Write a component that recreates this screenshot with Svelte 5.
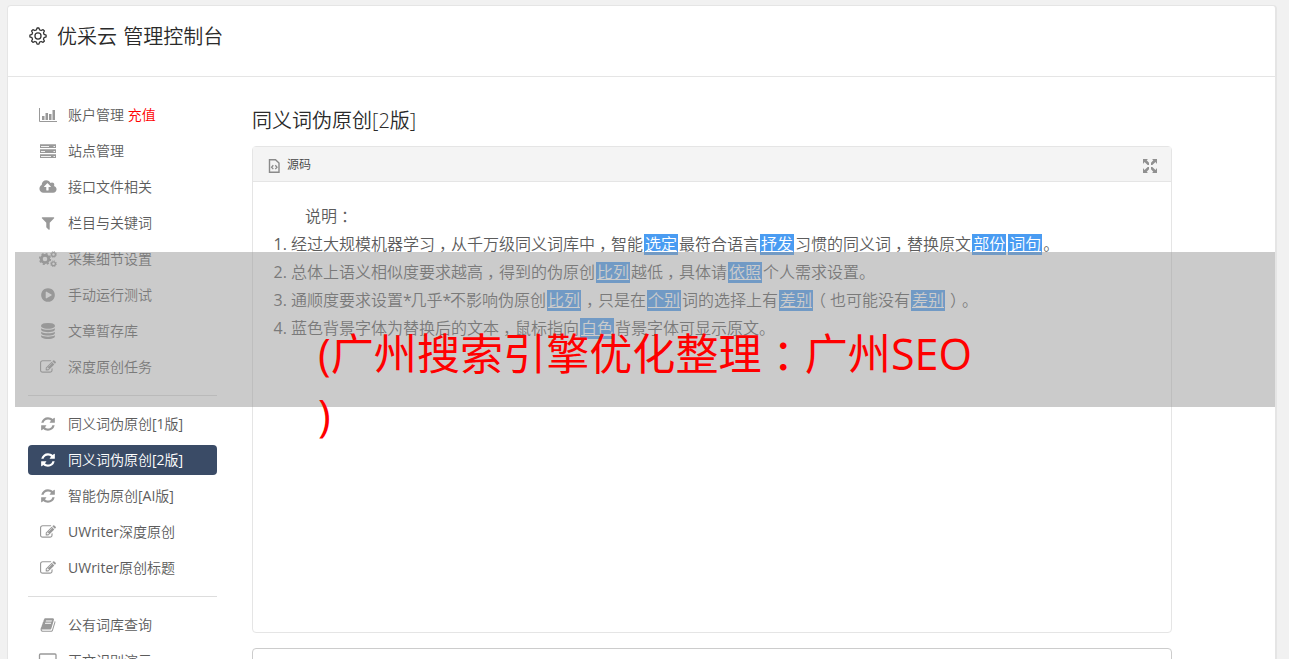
<script lang="ts">
	type MenuItem = { icon: string; label: string; extra?: string; active?: boolean };

	const menuGroups: MenuItem[][] = [
		[
			{ icon: "chart", label: "账户管理", extra: "充值" },
			{ icon: "server", label: "站点管理" },
			{ icon: "cloud", label: "接口文件相关" },
			{ icon: "filter", label: "栏目与关键词" },
			{ icon: "cogs", label: "采集细节设置" },
			{ icon: "play", label: "手动运行测试" },
			{ icon: "database", label: "文章暂存库" },
			{ icon: "edit", label: "深度原创任务" },
		],
		[
			{ icon: "refresh", label: "同义词伪原创[1版]" },
			{ icon: "refresh", label: "同义词伪原创[2版]", active: true },
			{ icon: "refresh", label: "智能伪原创[AI版]" },
			{ icon: "edit", label: "UWriter深度原创" },
			{ icon: "edit", label: "UWriter原创标题" },
		],
		[
			{ icon: "book", label: "公有词库查询" },
			{ icon: "laptop", label: "正文识别演示" },
		],
	];

	// replaced words are wrapped in {}
	const notes: string[] = [
		"经过大规模机器学习，从千万级同义词库中，智能{选定}最符合语言{抒发}习惯的同义词，替换原文{部份}{词句}。",
		"总体上语义相似度要求越高，得到的伪原创{比列}越低，具体请{依照}个人需求设置。",
		"通顺度要求设置*几乎*不影响伪原创{比列}，只是在{个别}词的选择上有{差别}（也可能没有{差别}）。",
		"蓝色背景字体为替换后的文本，鼠标指向{白色}背景字体可显示原文。",
	];

	// punctuation gets its own class so that it sits in the middle of its cell
	const marks: Record<string, string> = {
		"，": "mark right",
		"）": "mark right",
		"（": "mark left",
		"*": "star",
	};

	const split = (line: string) => line.split(/(\{.*?\}|[，（）*])/).filter(Boolean);

	const paths: Record<string, string> = {
		cloud: "M1280 864q0-14-9-23l-352-352q-9-9-23-9t-23 9l-351 351q-10 12-10 24 0 14 9 23t23 9h224v352q0 13 9.5 22.5t22.5 9.5h192q13 0 22.5-9.5t9.5-22.5v-352h224q13 0 22.5-9.5t9.5-22.5zm640 288q0 159-112.5 271.5t-271.5 112.5h-1088q-185 0-316.5-131.5t-131.5-316.5q0-130 70-240t188-165q-2-30-2-43 0-212 150-362t362-150q156 0 285.5 87t188.5 231q71-62 166-62 106 0 181 75t75 181q0 76-41 138 130 31 213.5 135.5t83.5 238.5z",
		filter: "M1595 295q17 41-14 70l-493 493v742q0 42-39 59-13 5-25 5-27 0-45-19l-256-256q-19-19-19-45v-486l-493-493q-31-29-14-70 17-39 59-39h1280q42 0 59 39z",
		play: "M896 128q209 0 385.5 103t279.5 279.5 103 385.5-103 385.5-279.5 279.5-385.5 103-385.5-103-279.5-279.5-103-385.5 103-385.5 279.5-279.5 385.5-103zm384 823q32-18 32-55t-32-55l-544-320q-31-19-64-1-32 19-32 56v640q0 37 32 56 16 8 32 8 17 0 32-9z",
		database: "M896 768q237 0 443-43t325-127v170q0 69-103 128t-280 93.5-385 34.5-385-34.5-280-93.5-103-128v-170q119 84 325 127t443 43zm0 768q237 0 443-43t325-127v170q0 69-103 128t-280 93.5-385 34.5-385-34.5-280-93.5-103-128v-170q119 84 325 127t443 43zm0-384q237 0 443-43t325-127v170q0 69-103 128t-280 93.5-385 34.5-385-34.5-280-93.5-103-128v-170q119 84 325 127t443 43zm0-1152q208 0 385 34.5t280 93.5 103 128v128q0 69-103 128t-280 93.5-385 34.5-385-34.5-280-93.5-103-128v-128q0-69 103-128t280-93.5 385-34.5z",
		edit: "M888 1184l116-116-152-152-116 116v56h96v96h56zm440-720q-16-16-33 1l-350 350q-17 17-1 33t33-1l350-350q17-17 1-33zm80 594v190q0 119-84.5 203.5t-203.5 84.5h-832q-119 0-203.5-84.5t-84.5-203.5v-832q0-119 84.5-203.5t203.5-84.5h832q63 0 117 25 15 7 18 23 3 17-9 29l-49 49q-14 14-32 8-23-6-45-6h-832q-66 0-113 47t-47 113v832q0 66 47 113t113 47h832q66 0 113-47t47-113v-126q0-13 9-22l64-64q15-15 35-7t20 29zm-96-738l288 288-672 672h-288v-288zm444 132l-92 92-288-288 92-92q28-28 68-28t68 28l152 152q28 28 28 68t-28 68z",
		refresh: "M1639 1056q0 5-1 7-64 268-268 434.5t-478 166.5q-146 0-282.5-55t-243.5-157l-129 129q-19 19-45 19t-45-19-19-45v-448q0-26 19-45t45-19h448q26 0 45 19t19 45-19 45l-137 137q71 66 161 102t187 36q134 0 250-65t186-179q11-17 53-117 8-23 30-23h192q13 0 22.5 9.5t9.5 22.5zm25-800v448q0 26-19 45t-45 19h-448q-26 0-45-19t-19-45 19-45l138-138q-148-137-349-137-134 0-250 65t-186 179q-11 17-53 117-8 23-30 23h-199q-13 0-22.5-9.5t-9.5-22.5v-7q65-268 270-434.5t480-166.5q146 0 284 55.5t245 156.5l130-129q19-19 45-19t45 19 19 45z",
		book: "M1703 478q40 57 18 129l-275 906q-19 64-76.5 107.5t-122.5 43.5h-923q-77 0-148.5-53.5t-99.5-131.5q-24-67-2-127 0-4 3-27t4-37q1-8-3-21.5t-3-19.5q2-11 8-21t16.5-23.5 16.5-23.5q23-38 45-91.5t30-91.5q3-10 .5-30t-.5-28q3-11 17-28t17-23q21-36 42-92t25-90q1-9-2.5-32t.5-28q4-13 22-30.5t22-22.5q19-26 42.5-84.5t27.5-96.5q1-8-3-25.5t-2-26.5q2-8 9-18t18-23 17-21q8-12 16.5-30.5t15-35 16-36 19.5-32 26.5-23.5 36-11.5 47.5 5.5l-1 3q38-9 51-9h761q74 0 114 56t18 130l-274 906q-36 119-71.5 153.5t-128.5 34.5h-869q-27 0-38 15-11 16-1 43 24 70 144 70h923q29 0 56-15.5t35-41.5l300-987q7-22 5-57 38 15 59 43zm-1064 2q-4 13 2 22.5t20 9.5h608q13 0 25.5-9.5t16.5-22.5l21-64q4-13-2-22.5t-20-9.5h-608q-13 0-25.5 9.5t-16.5 22.5zm-83 256q-4 13 2 22.5t20 9.5h608q13 0 25.5-9.5t16.5-22.5l21-64q4-13-2-22.5t-20-9.5h-608q-13 0-25.5 9.5t-16.5 22.5z",
	};
</script>

{#snippet menuIcon(name: string)}
	{#if name === "chart"}
		<svg class="icon" viewBox="0 0 20 16">
			<path d="M1.500 1v13.500H19" fill="none" stroke="currentColor" />
			<path d="M4 9h2.500v4H4zM7.500 6h2.500v7H7.500zM11 7h2.500v6H11zM14.500 3H17v10h-2.500z" />
		</svg>
	{:else if name === "server"}
		<svg class="icon" viewBox="0 0 20 16">
			<path d="M2 1h16v4H2zM2 6h16v4H2zM2 11h16v4H2z" />
			<path d="M3 3.500h8M3 8.500h4M3 13.500h10M15.500 3.500h1.500M15.500 8.500h1.500M15.500 13.500h1.500" stroke="#fff" stroke-opacity=".85" />
			<path d="M2 1.500h16M2 6.500h16M2 11.500h16" stroke="#fff" stroke-opacity=".25" />
		</svg>
	{:else if name === "cogs"}
		<svg class="icon" viewBox="0 0 20 16" fill="none" stroke="currentColor">
			<circle cx="7" cy="8" r="3.700" stroke-width="2.800" />
			<circle cx="7" cy="8" r="5.300" stroke-width="1.600" stroke-dasharray="2.080" />
			<circle cx="15.500" cy="3.500" r="1.900" stroke-width="1.300" />
			<circle cx="15.500" cy="3.500" r="2.900" stroke-width="1" stroke-dasharray="1.140" />
			<circle cx="15.500" cy="12.800" r="1.900" stroke-width="1.300" />
			<circle cx="15.500" cy="12.800" r="2.900" stroke-width="1" stroke-dasharray="1.140" />
		</svg>
	{:else if name === "laptop"}
		<svg class="icon" viewBox="0 0 20 16" fill="none" stroke="currentColor">
			<rect x="1.500" y="1" width="16.500" height="12" rx="1" stroke-width="1.300" />
			<path d="M0 15h20" />
		</svg>
	{:else}
		<svg class="icon" viewBox={name === "cloud" ? "-160 0 2240 1792" : "-224 0 2240 1792"}>
			<path d={paths[name]} />
		</svg>
	{/if}
{/snippet}

<div class="page">
	<div class="card">
		<header>
			<svg class="gear" viewBox="0.100 -0.700 19 19" fill="none" stroke="currentColor">
				<path
					d="M8.100 3L8.700 1.200h1.800L11.100 3l1.500.6 1.800-.9 1.300 1.300-.9 1.800.6 1.500 1.900.6v1.800l-1.900.6-.6 1.500.9 1.800-1.300 1.300-1.800-.9-1.500.6-.6 1.900H8.700l-.6-1.900-1.500-.6-1.800.9-1.300-1.300.9-1.800-.6-1.500-1.900-.6V7.900l1.900-.6.6-1.500-.9-1.800 1.300-1.300 1.800.9z"
					stroke-width="1.200"
					stroke-linejoin="round"
				/>
				<circle cx="9.600" cy="8.800" r="2.900" stroke-width="1.200" />
			</svg>
			<h1>优采云 管理控制台</h1>
		</header>

		<div class="content">
			<nav>
				{#each menuGroups as group}
					<ul>
						{#each group as item}
							<li class:active={item.active}>
								{@render menuIcon(item.icon)}
								<span>{item.label}{#if item.extra}&nbsp;<em>{item.extra}</em>{/if}</span>
							</li>
						{/each}
					</ul>
				{/each}
			</nav>

			<main>
				<h2>同义词伪原创[2版]</h2>
				<section class="editor">
					<div class="toolbar">
						<svg class="source" viewBox="0 0 12 14" fill="none" stroke="#8a8a8a">
							<path d="M1.500.7h6L11 4v9.300H1.500z" stroke-width="1.400" />
							<path d="M5.300 6.300L3.600 8.200l1.700 1.900M7.300 6.300L9 8.200l-1.700 1.900" stroke-width="1.300" />
						</svg>
						<span>源码</span>
						<svg class="expand" viewBox="0 0 14 14" fill="#909090">
							<path d="M0 0h5L3.700 1.300 6 3.700V6H4.700L1.500 3 0 5zM14 0H9l1.300 1.300L8 3.700V6h1.300l3.200-3L14 5zM0 14h5l-1.300-1.300L6 10.300V8H4.700l-3.200 3L0 9zM14 14H9l1.300-1.300L8 10.300V8h1.300l3.200 3L14 9z" />
						</svg>
					</div>
					<div class="text">
						<p>说明<span class="mark colon">：</span></p>
						<ol>
							{#each notes as note}
								<li>
									{#each split(note) as part}{#if part[0] === "{"}<u>{part.slice(1, -1)}</u>{:else if marks[part]}<span class={marks[part]}>{part}</span>{:else}{part}{/if}{/each}
								</li>
							{/each}
						</ol>
					</div>
				</section>
				<section class="result"></section>
			</main>
		</div>
	</div>

	<div class="banner"></div>
	<div class="caption">(广州搜索引擎优化整理<span class="mark colon">：</span>广州SEO<br />)</div>
</div>

<style>
	:global(body) {
		background: #f1f1f1;
		overflow: hidden;
	}

	.page {
		position: relative;
		box-sizing: border-box;
		height: 659px;
		padding: 5px 12px 0 7px;
		overflow: hidden;
		color: #5c5c5c;
		font-family: "Open Sans", "Noto Sans CJK SC DemiLight", "Noto Sans CJK SC", sans-serif;
		font-weight: 400;
	}

	.card {
		box-sizing: border-box;
		height: 700px;
		border: 1px solid #e5e5e5;
		border-right-width: 2px;
		border-radius: 4px;
		background: #fff;
	}

	header {
		display: flex;
		box-sizing: border-box;
		height: 71px;
		padding: 16px 20px;
		gap: 9px;
		border-bottom: 1px solid #e5e5e5;
		color: #333;
	}

	.gear {
		width: 20px;
		height: 20px;
		margin-top: 4px;
	}

	h1,
	h2 {
		margin: 0;
		color: #2a2a2a;
		font-size: 20px;
		font-weight: 350;
		line-height: 30px;
		white-space: nowrap;
	}

	h1 {
		word-spacing: 1px;
	}

	.content {
		display: flex;
		padding: 23px 20px 0;
		gap: 35px;
	}

	nav {
		width: 189px;
		flex: none;
		font-size: 14px;
	}

	nav ul {
		display: grid;
		gap: 6px;
		margin: 0;
		padding: 0 0 13px;
		list-style: none;
	}

	nav ul + ul {
		padding-top: 13px;
		border-top: 1px solid #ddd;
	}

	nav li {
		display: flex;
		align-items: center;
		height: 30px;
		padding-left: 10px;
		gap: 10px;
		border-radius: 4px;
		line-height: 30px;
		white-space: nowrap;
	}

	nav li.active {
		background: #3a4b66;
		color: #fff;
	}

	nav em {
		color: #f00;
		font-style: normal;
	}

	.icon {
		width: 20px;
		height: 16px;
		color: #999;
		fill: currentColor;
	}

	.icon[fill="none"] {
		fill: none;
	}

	.active .icon {
		color: #fff;
	}

	main {
		width: 920px;
		flex: none;
	}

	h2 {
		margin: 6px 0 10px;
	}

	.editor {
		box-sizing: border-box;
		height: 487px;
		border: 1px solid #e5e5e5;
		border-radius: 4px;
	}

	.toolbar {
		display: flex;
		align-items: center;
		height: 34px;
		padding: 0 14px 0 15px;
		gap: 7px;
		border-bottom: 1px solid #e5e5e5;
		background: #f4f4f4;
		color: #444;
		font-size: 12px;
	}

	.source {
		width: 12px;
		height: 14px;
		margin-top: 3px;
	}

	.expand {
		width: 14px;
		height: 14px;
		margin: 4px 0 0 auto;
	}

	.text {
		padding: 20px 20px 0;
		font-size: 16px;
		line-height: 28px;
		white-space: nowrap;
	}

	.text p {
		margin: 0;
		padding-left: 32px;
	}

	.text ol {
		margin: 0;
		padding-left: 18px;
	}

	.text u {
		display: inline-block;
		height: 21px;
		margin: 0 1px;
		padding: 0 1px;
		background: #4a9cf2;
		color: #fff;
		line-height: 21px;
	}

	.mark {
		display: inline-block;
		width: 1em;
	}

	.mark.right {
		text-indent: 0.25em;
	}

	.mark.left {
		text-indent: -0.25em;
	}

	.star {
		letter-spacing: -1.4px;
	}

	.mark.colon {
		text-indent: 0.25em;
	}

	.result {
		height: 80px;
		margin-top: 15px;
		border: 1px solid #ccc;
		border-radius: 4px;
	}

	.banner {
		position: absolute;
		top: 252px;
		left: 15px;
		width: 1260px;
		height: 155px;
		background: rgba(151, 151, 151, 0.5);
	}

	.caption {
		position: absolute;
		top: 323px;
		left: 318px;
		color: #f00;
		font-family: "Open Sans", "Noto Sans CJK SC", sans-serif;
		font-size: 43.1px;
		font-weight: 400;
		line-height: 61px;
		white-space: nowrap;
	}
</style>
